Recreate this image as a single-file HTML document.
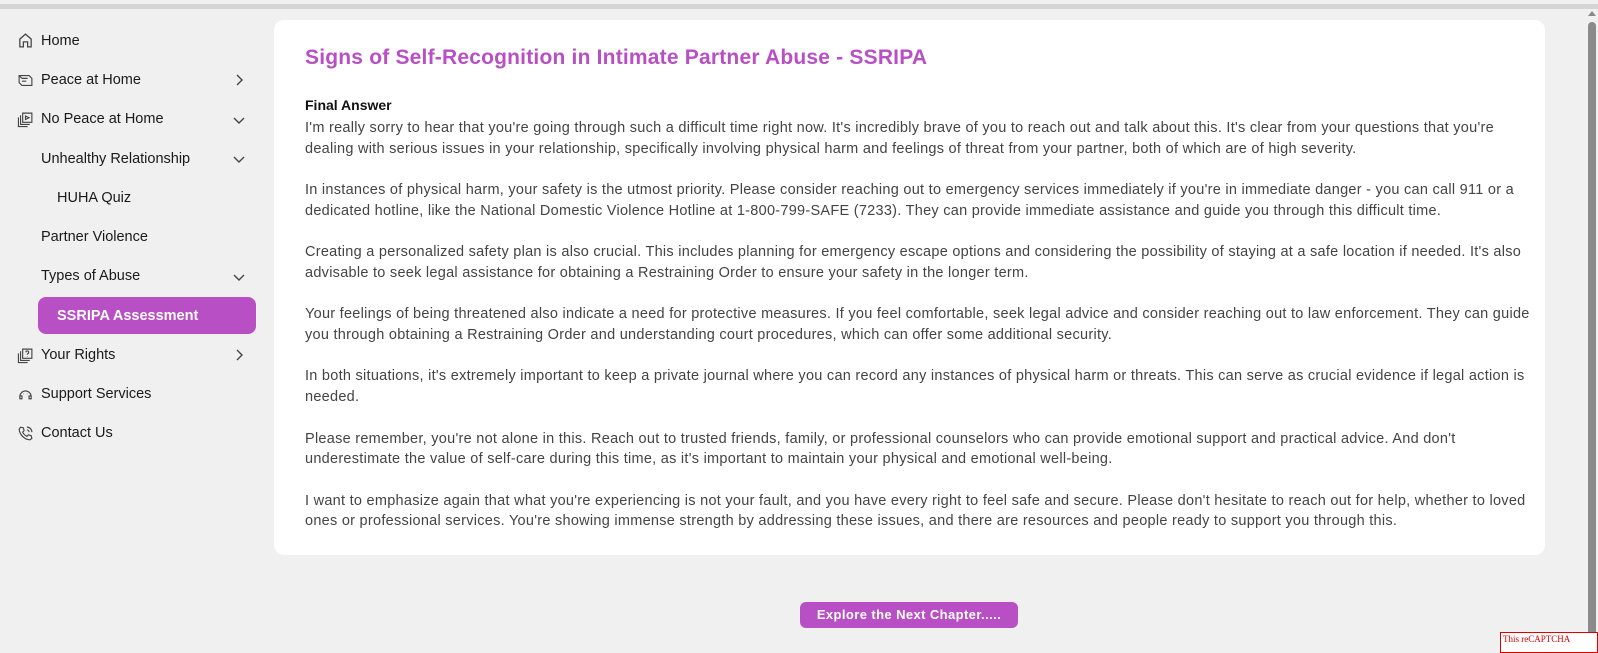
<!DOCTYPE html>
<html><head><meta charset="utf-8"><style>
*{margin:0;padding:0;box-sizing:border-box}
html,body{width:1598px;height:653px;overflow:hidden;background:#f0f0f0;font-family:"Liberation Sans",sans-serif}
.topbar{position:absolute;left:0;top:4px;width:1598px;height:5px;background:#d4d4d4}
.it{position:absolute;font-size:14.5px;color:#1a1a1a;white-space:nowrap}
.ic{position:absolute;left:17px;width:17px;height:17px}
.chev{position:absolute;left:233px;width:12px;height:12px}
.act{position:absolute;left:38px;top:297px;width:218px;height:37px;background:#b84fc4;border-radius:8px}
.card{position:absolute;left:274px;top:20px;width:1271px;height:535px;background:#fff;border-radius:10px}
h1{position:absolute;left:305px;top:46px;font-size:21px;letter-spacing:.2px;color:#b84fc4;font-weight:bold;white-space:nowrap}
.fa{position:absolute;left:305px;top:97px;font-size:14px;font-weight:bold;color:#111}
.txt{position:absolute;left:305px;top:118px;font-size:14.5px;letter-spacing:.27px;line-height:20.7px;color:#444;white-space:nowrap}
.btn{position:absolute;left:800px;top:602px;width:218px;height:26px;background:#b84fc4;border-radius:6px;color:#fff;font-weight:bold;font-size:13px;text-align:center;line-height:26px;letter-spacing:.4px}
.sb{position:absolute;left:1587px;top:20px;width:11px;height:625px;background:#f0f0f0}
.th{position:absolute;left:1588px;top:22px;width:8px;height:618px;background:#8a8a8a;border-radius:4px}
</style></head><body>
<div class="topbar"></div>
<svg class="ic" style="top:32px" viewBox="0 0 24 24" fill="none" stroke="#444" stroke-width="1.8"><path d="M4 21V10l8-7 8 7v11h-5v-7H9v7z"/></svg>
<div class="it" style="left:41px;top:33px">Home</div>
<svg class="ic" style="top:72px" viewBox="0 0 24 24" fill="none" stroke="#444" stroke-width="1.6"><path d="M3 5h14l4 4v10H7l-4-4zM7 9h8M7 13h6M3 5l4 4"/></svg>
<div class="it" style="left:41px;top:72px">Peace at Home</div>
<svg class="chev" style="top:74px" viewBox="0 0 12 12" fill="none" stroke="#444" stroke-width="1.4"><path d="M4 1l5 5-5 5"/></svg>
<svg class="ic" style="top:111px" viewBox="0 0 24 24" fill="none" stroke="#444" stroke-width="1.6"><path d="M8 3h13v13H8zM5 6v13h13M2 9v13h13M12 7l5 2.5-5 2.5z"/></svg>
<div class="it" style="left:41px;top:111px">No Peace at Home</div>
<svg class="chev" style="top:114px" viewBox="0 0 12 12" fill="none" stroke="#444" stroke-width="1.4"><path d="M1 4l5 5 5-5"/></svg>
<div class="it" style="left:41px;top:151px">Unhealthy Relationship</div>
<svg class="chev" style="top:153px" viewBox="0 0 12 12" fill="none" stroke="#444" stroke-width="1.4"><path d="M1 4l5 5 5-5"/></svg>
<div class="it" style="left:57px;top:190px">HUHA Quiz</div>
<div class="it" style="left:41px;top:229px">Partner Violence</div>
<div class="it" style="left:41px;top:268px">Types of Abuse</div>
<svg class="chev" style="top:271px" viewBox="0 0 12 12" fill="none" stroke="#444" stroke-width="1.4"><path d="M1 4l5 5 5-5"/></svg>
<div class="act"></div>
<div class="it" style="left:57px;top:308px;color:#fff;font-weight:bold">SSRIPA Assessment</div>
<svg class="ic" style="top:347px" viewBox="0 0 24 24" fill="none" stroke="#444" stroke-width="1.6"><path d="M8 3h13v13H8zM5 6v13h13M2 9v13h13M12.5 7.5a2 2 0 1 1 2.5 2c-.5.3-.5.8-.5 1.5M14.5 13v.5"/></svg>
<div class="it" style="left:41px;top:347px">Your Rights</div>
<svg class="chev" style="top:349px" viewBox="0 0 12 12" fill="none" stroke="#444" stroke-width="1.4"><path d="M4 1l5 5-5 5"/></svg>
<svg class="ic" style="top:386px" viewBox="0 0 24 24" fill="none" stroke="#444" stroke-width="1.6"><path d="M4 15a8 8 0 0 1 16 0M4 15v3h3v-4H4M20 15v3h-3v-4h3M9 11h.5M14 11h.5"/></svg>
<div class="it" style="left:41px;top:386px">Support Services</div>
<svg class="ic" style="top:425px" viewBox="0 0 24 24" fill="none" stroke="#444" stroke-width="1.6"><path d="M5 3l4 1 1 4-2 2a11 11 0 0 0 6 6l2-2 4 1 1 4-3 2C10 20 4 14 3 6zM14 3a7 7 0 0 1 7 7M14 7a3 3 0 0 1 3 3"/></svg>
<div class="it" style="left:41px;top:425px">Contact Us</div>

<div class="card"></div>
<h1>Signs of Self-Recognition in Intimate Partner Abuse - SSRIPA</h1>
<div class="fa">Final Answer</div>
<div class="txt">I'm really sorry to hear that you're going through such a difficult time right now. It's incredibly brave of you to reach out and talk about this. It's clear from your questions that you're<br>dealing with serious issues in your relationship, specifically involving physical harm and feelings of threat from your partner, both of which are of high severity.<br><br>In instances of physical harm, your safety is the utmost priority. Please consider reaching out to emergency services immediately if you're in immediate danger - you can call 911 or a<br>dedicated hotline, like the National Domestic Violence Hotline at 1-800-799-SAFE (7233). They can provide immediate assistance and guide you through this difficult time.<br><br>Creating a personalized safety plan is also crucial. This includes planning for emergency escape options and considering the possibility of staying at a safe location if needed. It's also<br>advisable to seek legal assistance for obtaining a Restraining Order to ensure your safety in the longer term.<br><br>Your feelings of being threatened also indicate a need for protective measures. If you feel comfortable, seek legal advice and consider reaching out to law enforcement. They can guide<br>you through obtaining a Restraining Order and understanding court procedures, which can offer some additional security.<br><br>In both situations, it's extremely important to keep a private journal where you can record any instances of physical harm or threats. This can serve as crucial evidence if legal action is<br>needed.<br><br>Please remember, you're not alone in this. Reach out to trusted friends, family, or professional counselors who can provide emotional support and practical advice. And don't<br>underestimate the value of self-care during this time, as it's important to maintain your physical and emotional well-being.<br><br>I want to emphasize again that what you're experiencing is not your fault, and you have every right to feel safe and secure. Please don't hesitate to reach out for help, whether to loved<br>ones or professional services. You're showing immense strength by addressing these issues, and there are resources and people ready to support you through this.</div>
<div class="btn">Explore the Next Chapter.....</div>
<div class="sb"></div><div class="th"></div>
<div style="position:absolute;left:1588px;top:11px;width:0;height:0;border-left:4px solid transparent;border-right:4px solid transparent;border-bottom:5px solid #888"></div>
<div style="position:absolute;left:1500px;top:632px;width:98px;height:21px;background:#fff;border:1px solid #d00;font-family:'Liberation Serif',serif;font-size:9px;color:#d00;padding-left:2px;line-height:12px">This reCAPTCHA</div>
</body></html>
